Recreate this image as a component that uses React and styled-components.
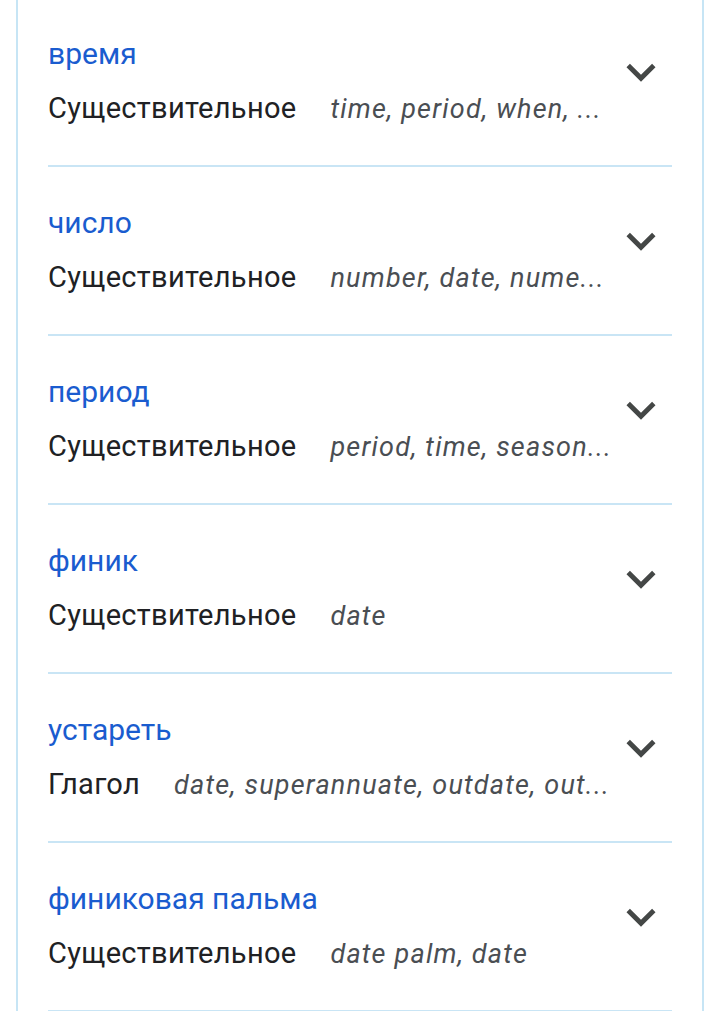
import React from "react";
import styled, { createGlobalStyle } from "styled-components";

const GlobalStyle = createGlobalStyle`
  html, body {
    margin: 0;
    padding: 0;
    background: #ffffff;
  }
  body {
    font-family: Roboto, "Liberation Sans", Arial, sans-serif;
    -webkit-font-smoothing: antialiased;
  }
`;

const Card = styled.div`
  margin: -2px 16px 0;
  border-left: 2px solid #c7e5f5;
  border-right: 2px solid #c7e5f5;
  padding: 0 30px;
  background: #fff;
`;

const Row = styled.div`
  display: flex;
  align-items: center;
  height: 167px;
  border-bottom: 2px solid #c9e5f5;
  padding-right: 2px;
`;

const TextBlock = styled.div`
  flex: 1;
  min-width: 0;
  display: flex;
  flex-direction: column;
  gap: 14px;
  margin-bottom: 2px;
`;

const Word = styled.div`
  font-size: 30px;
  line-height: 40px;
  color: #1a5ccf;
  margin-top: 2px;
`;

const Meta = styled.div`
  display: flex;
  align-items: baseline;
  gap: 34px;
  line-height: 40px;
  white-space: nowrap;
  min-width: 0;
`;

const Pos = styled.span`
  font-size: 29px;
  letter-spacing: 0.3px;
  color: #202124;
  flex-shrink: 0;
`;

const Translation = styled.span`
  font-size: 27px;
  letter-spacing: 1.2px;
  font-style: italic;
  color: #4a4e53;
  min-width: 0;
`;

const Toggle = styled.div`
  flex-shrink: 0;
  width: 58px;
  height: 58px;
  margin-left: 6px;
  margin-bottom: 20px;
  color: #444746;
  svg {
    display: block;
  }
`;

const Chevron = () => (
  <svg width="58" height="58" viewBox="0 0 24 24" fill="currentColor">
    <path d="M16.59 8.59L12 13.17 7.41 8.59 6 10l6 6 6-6z" />
  </svg>
);

const entries = [
  { word: "время", pos: "Существительное", tr: "time, period, when, ..." },
  { word: "число", pos: "Существительное", tr: "number, date, nume..." },
  { word: "период", pos: "Существительное", tr: "period, time, season..." },
  { word: "финик", pos: "Существительное", tr: "date" },
  { word: "устареть", pos: "Глагол", tr: "date, superannuate, outdate, out..." },
  { word: "финиковая пальма", pos: "Существительное", tr: "date palm, date" },
];

export default function App() {
  return (
    <>
      <GlobalStyle />
      <Card>
        {entries.map((e) => (
          <Row key={e.word}>
            <TextBlock>
              <Word>{e.word}</Word>
              <Meta>
                <Pos>{e.pos}</Pos>
                <Translation>{e.tr}</Translation>
              </Meta>
            </TextBlock>
            <Toggle>
              <Chevron />
            </Toggle>
          </Row>
        ))}
      </Card>
    </>
  );
}
